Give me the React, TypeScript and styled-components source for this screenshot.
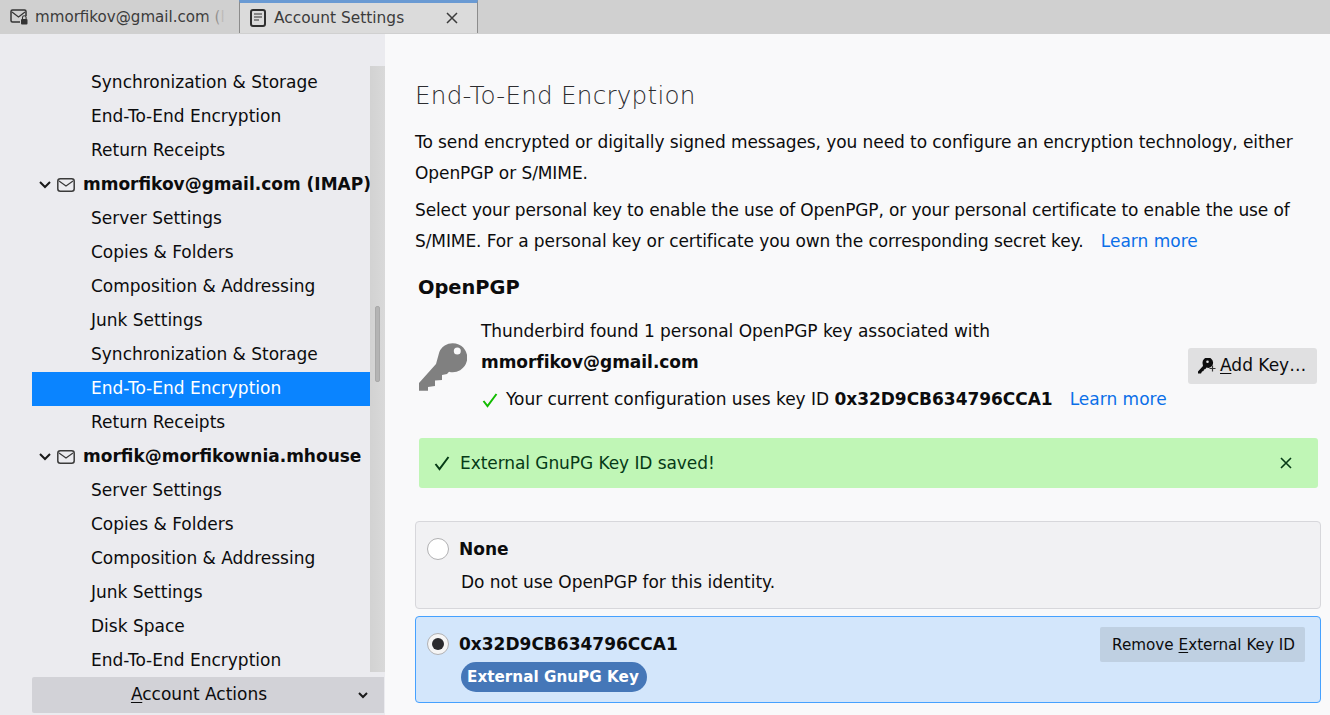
import React from "react";
import styled, { createGlobalStyle } from "styled-components";

const Global = createGlobalStyle`
  html, body { margin: 0; padding: 0; height: 715px; overflow: hidden; }
  body { font-family: "DejaVu Sans", sans-serif; color: #0c0c0d; font-size: 17px; background: #f9f9fa; }
  #root { height: 715px; }
`;

const Page = styled.div`
  height: 715px; display: flex; flex-direction: column; overflow: hidden;
`;
const TabBar = styled.div`
  height: 34px; flex: none; display: flex; background: #d0d0d0;
  box-sizing: border-box; color: #3b3b3b; font-size: 15.1px;
`;
const InactiveTab = styled.div`
  width: 239px; flex: none; box-sizing: border-box; padding-left: 10px; display: flex; align-items: center; gap: 7px;
  overflow: hidden; white-space: nowrap; position: relative;
  svg { flex: none; }
`;
const Fade = styled.span`
  position: absolute; right: 0; top: 0; bottom: 0; width: 34px;
  background: linear-gradient(to right, rgba(208,208,208,0), #d0d0d0 60%);
`;
const ActiveTab = styled.div`
  width: 239px; flex: none; box-sizing: border-box; padding: 0 19px 0 10px; display: flex; align-items: center; gap: 8px;
  background: #dbdbdb; border-top: 3px solid #6a9ad3; border-left: 1px solid #8c8c8c; border-right: 1px solid #8c8c8c;
  margin-bottom: 1px;
`;
const TabTitle = styled.span` flex: 1; font-size: 15.4px; `;
const Body = styled.div` flex: 1; display: flex; min-height: 0; `;
const Sidebar = styled.aside`
  width: 385px; flex: none; background: #ebebef; padding: 32px 0 0 32px; box-sizing: border-box;
  display: flex; flex-direction: column;
`;
const TreeArea = styled.div` display: flex; height: 606px; `;
const Tree = styled.div` width: 338px; flex: none; overflow: hidden; `;
const Row = styled.div<{ $selected?: boolean }>`
  height: 34px; line-height: 33px; padding-left: 59px; white-space: nowrap;
  background: ${p => (p.$selected ? "#0a84ff" : "transparent")};
  color: ${p => (p.$selected ? "#fff" : "#0c0c0d")};
`;
const AccountRow = styled.div`
  height: 34px; line-height: 32px; display: flex; align-items: center; padding-left: 6px; gap: 5px; white-space: nowrap;
  font-weight: 700; color: #0c0c0d;
  svg { flex: none; }
`;
const AccountName = styled.span` margin: 0 0 2px 3px; `;
const Scrollbar = styled.div`
  width: 15px; flex: none; background: linear-gradient(to right, #d2d2d2, #d9d9d9);
  padding: 240px 0 0 5px; box-sizing: border-box;
`;
const Thumb = styled.div`
  width: 5px; height: 76px; background: #b4b4b4; border: 1px solid #a9a9a9; border-radius: 2px; box-sizing: border-box;
`;
const ActionsButton = styled.div`
  margin-top: 5px; height: 36px; width: 352px; background: #d2d2d7; border-radius: 2px 0 0 2px; display: flex;
  align-items: center; position: relative; justify-content: center; padding: 0 18px 2px 0; box-sizing: border-box;
`;
const Caret = styled.svg` position: absolute; right: 16px; top: 15px; `;
const Main = styled.main`
  flex: 1; background: #f9f9fa; padding: 44px 9px 0 30px; box-sizing: border-box; overflow: hidden; letter-spacing: -0.03px;
`;
const Title = styled.h1`
  margin: 0 0 13px; font-size: 24.6px; font-weight: 200; line-height: 36px; color: #2d2d30; letter-spacing: 0.26px;
  font-family: "DejaVu Sans", sans-serif;
`;
const Para = styled.p`
  margin: 0 0 6px; line-height: 31px; letter-spacing: -0.078px;
`;
const TightLine = styled.span` letter-spacing: -0.135px; `;
const LooseLine = styled.span` letter-spacing: -0.095px; `;
const Link = styled.span` color: #0b6fe8; letter-spacing: 0; `;
const ParaLink = styled(Link)` margin-left: 12px; `;
const Heading = styled.h2`
  margin: 17px 0 14px 3px; font-size: 19.4px; font-weight: 700; line-height: 28px; letter-spacing: 0;
`;
const KeyBlock = styled.div` display: flex; align-items: center; margin-left: 4px; `;
const KeyIcon = styled.svg` flex: none; margin: 2px 14px 0 0; `;
const KeyText = styled.div` flex: 1; `;
const KeyLine = styled.div` line-height: 31px; `;
const StatusLine = styled.div` display: flex; align-items: center; line-height: 31px; margin-top: 6px; gap: 7px; `;
const Mono = styled.b` font-weight: 700; `;
const StatusLink = styled(Link)` margin-left: 17px; `;
const AddButton = styled.button`
  font: inherit; border: 0; background: #e0e0e1; border-radius: 3px; width: 129px; height: 36px; padding: 0 0 0 10px;
  display: flex; align-items: center; gap: 4px; color: #0c0c0d; margin: 1px 4px 0 0;
`;
const AddLabel = styled.span` margin-bottom: 2px; `;
const U = styled.span` text-decoration: underline; text-underline-offset: 2px; `;
const Notice = styled.div`
  height: 50px; margin: 23px 3px 0 4px; background: #c0f6b6; border-radius: 3px; color: #063a16;
  display: flex; align-items: center; padding: 0 26px 1px 14px; box-sizing: border-box; letter-spacing: -0.07px;
`;
const NoticeText = styled.span` flex: 1; margin-left: 9px; `;
const Card = styled.div<{ $selected?: boolean }>`
  box-sizing: border-box; border-radius: 4px; padding: 0 10px 0 11px;
  border: 1px solid ${p => (p.$selected ? "#45a1ff" : "#d7d7db")};
  background: ${p => (p.$selected ? "#d3e6fb" : "#f1f1f3")};
  height: ${p => (p.$selected ? "87px" : "88px")};
  margin-top: ${p => (p.$selected ? "7px" : "33px")};
`;
const CardHead = styled.div` display: flex; align-items: center; gap: 10px; height: 34px; padding-top: 10px; `;
const Radio = styled.span<{ $on?: boolean }>`
  width: 22px; height: 22px; box-sizing: border-box; border-radius: 50%; border: 1px solid #b1b1b3;
  background: ${p => (p.$on ? "#f5f5f5" : "#fff")}; flex: none; display: flex; align-items: center; justify-content: center;
  &::after { content: ""; width: 12px; height: 12px; border-radius: 50%; background: #2a2a2e; display: ${p => (p.$on ? "block" : "none")}; }
`;
const CardTitle = styled.b` font-weight: 700; flex: 1; letter-spacing: 0; `;
const CardDesc = styled.div` margin-left: 34px; line-height: 32px; `;
const Remove = styled.button`
  font: inherit; font-size: 15.2px; border: 0; background: #bfd0e2; border-radius: 2px; flex: none; width: 205px; height: 35px; color: #0c0c0d;
  padding: 1px 0 0 2px; margin-right: 5px;
`;
const Badge = styled.div`
  width: fit-content; margin: 1px 0 0 34px; background: #4577b8; color: #fff; font-weight: 700; border-radius: 15px;
  height: 30px; line-height: 30px; padding: 0 8px 0 6px; font-size: 15.2px; letter-spacing: 0.02px;
`;

const MailIcon = () => (
  <svg width="18" height="14" viewBox="0 0 18 14" fill="none">
    <rect x="0.8" y="0.8" width="16.4" height="12.4" rx="2.500" stroke="#3a3a3a" strokeWidth="1.500" />
    <path d="M2 3l7 5 7-5" stroke="#3a3a3a" strokeWidth="1.200" />
  </svg>
);
const Sec = ({ items, sel }: { items: string[]; sel?: string }) => (
  <>{items.map(t => <Row key={t} $selected={t === sel}>{t}</Row>)}</>
);
const Chevron = () => (
  <svg width="14" height="10" viewBox="0 0 14 10" fill="none"><path d="M2 2l5 5 5-5" stroke="#1a1a1a" strokeWidth="2" /></svg>
);
const Account = ({ name }: { name: string }) => (
  <AccountRow><Chevron /><MailIcon /><AccountName>{name}</AccountName></AccountRow>
);
const Check = ({ color }: { color: string }) => (
  <svg width="18" height="16" viewBox="0 0 18 16" fill="none"><path d="M2.500 9l4 5L15.500 2" stroke={color} strokeWidth="2" /></svg>
);

export default function App() {
  return (
    <Page>
      <Global />
      <TabBar>
        <InactiveTab>
          <svg width="18" height="16" viewBox="0 0 18 16" fill="none">
            <path d="M10 13H2.500A1.500 1.500 0 0 1 1 11.500v-9A1.500 1.500 0 0 1 2.500 1h12A1.500 1.500 0 0 1 16 2.500V7" stroke="#333" strokeWidth="1.500" />
            <path d="M2 3l6.500 5L15 3" stroke="#333" strokeWidth="1.200" />
            <rect x="11" y="10" width="6.500" height="5.500" rx="1" fill="#333" />
            <path d="M12.500 10V8.500a1.800 1.800 0 0 1 3.600 0V10" stroke="#333" strokeWidth="1.100" />
          </svg>
          <span>mmorfikov@gmail.com (IMAP)</span>
          <Fade />
        </InactiveTab>
        <ActiveTab>
          <svg width="16" height="18" viewBox="0 0 16 18" fill="none">
            <rect x="1" y="1" width="14" height="16" rx="2" stroke="#2f2f2f" strokeWidth="2" />
            <path d="M4 5h8M4 8h8M4 11h5" stroke="#333" strokeWidth="1.200" />
          </svg>
          <TabTitle>Account Settings</TabTitle>
          <svg width="12" height="12" viewBox="0 0 12 12" fill="none"><path d="M1 1l10 10M11 1L1 11" stroke="#3b3b3b" strokeWidth="1.500" /></svg>
        </ActiveTab>
      </TabBar>
      <Body>
        <Sidebar>
          <TreeArea>
            <Tree>
              <Sec items={["Synchronization & Storage", "End-To-End Encryption", "Return Receipts"]} />
              <Account name="mmorfikov@gmail.com (IMAP)" />
              <Sec items={["Server Settings", "Copies & Folders", "Composition & Addressing", "Junk Settings", "Synchronization & Storage", "End-To-End Encryption", "Return Receipts"]} sel="End-To-End Encryption" />
              <Account name="morfik@morfikownia.mhouse" />
              <Sec items={["Server Settings", "Copies & Folders", "Composition & Addressing", "Junk Settings", "Disk Space", "End-To-End Encryption"]} />
            </Tree>
            <Scrollbar><Thumb /></Scrollbar>
          </TreeArea>
          <ActionsButton>
            <span><U>A</U>ccount Actions</span>
            <Caret width="10" height="7" viewBox="0 0 10 7" fill="none"><path d="M1 1l4 4 4-4" stroke="#1a1a1a" strokeWidth="2" /></Caret>
          </ActionsButton>
        </Sidebar>
        <Main>
          <Title>End-To-End Encryption</Title>
          <Para>To send encrypted or digitally signed messages, you need to configure an encryption technology, either<br />OpenPGP or S/MIME.</Para>
          <Para><TightLine>Select your personal key to enable the use of OpenPGP, or your personal certificate to enable the use of</TightLine><br /><LooseLine>S/MIME. For a personal key or certificate you own the corresponding secret key. </LooseLine><ParaLink>Learn more</ParaLink></Para>
          <Heading>OpenPGP</Heading>
          <KeyBlock>
            <KeyIcon width="48" height="48" viewBox="0 0 48 48">
              <path fill="#808080" fillRule="evenodd" d="M0 40L17 21L19.500 12A14.500 14.500 0 1 1 30 28.700L28 31L23 32L23 37L16 37.500L16 43L9 44L9 47.700H0ZM38.300 4.500a3.500 3.500 0 1 0 0 7 3.500 3.500 0 0 0 0-7z" />
            </KeyIcon>
            <KeyText>
              <KeyLine>Thunderbird found 1 personal OpenPGP key associated with</KeyLine>
              <KeyLine><Mono>mmorfikov@gmail.com</Mono></KeyLine>
              <StatusLine>
                <Check color="#12bc00" />
                <span>Your current configuration uses key ID <Mono>0x32D9CB634796CCA1</Mono><StatusLink>Learn more</StatusLink></span>
              </StatusLine>
            </KeyText>
            <AddButton>
              <svg width="18" height="16" viewBox="0 0 18 16" fill="none">
                <path fill="#0c0c0d" fillRule="evenodd" d="M0 13.500L5 8L4.500 5A5.300 5.300 0 1 1 10.500 10L8.500 9.500L7.500 11L6 11.500L5.500 13L4 13.500L3 15.500H0ZM9.500 2.500a1.300 1.300 0 1 0 0 2.600 1.300 1.300 0 0 0 0-2.600z" />
                <path d="M14.500 7.500v6M11.500 10.500h6" stroke="#333" strokeWidth="1.200" />
              </svg>
              <AddLabel><U>A</U>dd Key…</AddLabel>
            </AddButton>
          </KeyBlock>
          <Notice>
            <Check color="#063a16" />
            <NoticeText>External GnuPG Key ID saved!</NoticeText>
            <svg width="12" height="12" viewBox="0 0 12 12" fill="none"><path d="M1 1l10 10M11 1L1 11" stroke="#063a16" strokeWidth="1.600" /></svg>
          </Notice>
          <Card>
            <CardHead><Radio /><CardTitle>None</CardTitle></CardHead>
            <CardDesc>Do not use OpenPGP for this identity.</CardDesc>
          </Card>
          <Card $selected>
            <CardHead>
              <Radio $on />
              <CardTitle>0x32D9CB634796CCA1</CardTitle>
              <Remove>Remove <U>E</U>xternal Key ID</Remove>
            </CardHead>
            <Badge>External GnuPG Key</Badge>
          </Card>
        </Main>
      </Body>
    </Page>
  );
}
